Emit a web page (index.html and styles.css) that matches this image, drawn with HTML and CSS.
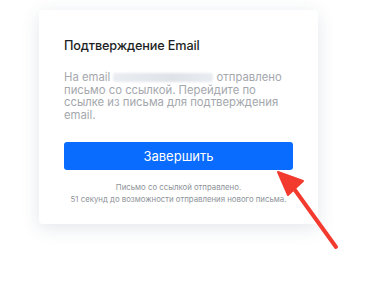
FILE: index.html
```html
<!DOCTYPE html>
<html>
<head>
<meta charset="utf-8">
<link rel="stylesheet" href="styles.css">
</head>
<body>
<div class="card">
  <h1 class="title">Подтверждение Email</h1>
  <p class="text">На email <span class="blur"></span> отправлено письмо со ссылкой. Перейдите по ссылке из письма для подтверждения email.</p>
  <button class="btn">Завершить</button>
  <p class="note">Письмо со ссылкой отправлено.<br>51 секунд до возможности отправления нового письма.</p>
</div>
<svg class="arrow" width="372" height="296" viewBox="0 0 372 296">
  <line x1="336" y1="247" x2="292" y2="186" stroke="#f33a2f" stroke-width="4" stroke-linecap="round"/>
  <polygon points="278,172 303,181 288,195" fill="#f33a2f" stroke="#f33a2f" stroke-width="2" stroke-linejoin="round"/>
</svg>
</body>
</html>
```
FILE: styles.css
```css
html, body { margin: 0; padding: 0; background: #fff; }
body {
  width: 372px; height: 296px; position: relative; overflow: hidden;
  font-family: Inter, "Noto Sans", sans-serif;
  padding: 10px 0 0 39px; box-sizing: border-box;
}
.card {
  width: 279px; height: 214px; box-sizing: border-box;
  background: #fff; border-radius: 4px;
  box-shadow: 0 4px 18px rgba(40, 60, 100, 0.13);
  padding: 28px 25px 0 25px;
}
.title {
  margin: 0; font-size: 12.7px; font-weight: 500; color: #1d1f24;
  line-height: 16px; letter-spacing: -0.15px;
}
.text {
  margin: 17px 0 0; font-size: 11.3px; line-height: 12.7px; color: #a4a7ad;
}
.blur {
  display: inline-block; width: 100px; height: 9px; vertical-align: -1px;
  background: linear-gradient(90deg, #eaedf2, #dfe2e8 60%, #e9ecf1);
  filter: blur(1px); border-radius: 2px;
}
.btn {
  display: block; width: 229px; height: 28px; margin: 20px 0 0;
  border: none; border-radius: 3px; background: #0a6cff; color: #fff;
  font-family: inherit; font-size: 13px; font-weight: 400; padding: 0;
}
.note {
  margin: 11px 0 0; text-align: center; font-size: 7.8px; line-height: 12.5px;
  color: #8e9299;
}
.arrow { position: absolute; left: 0; top: 0; }
```
